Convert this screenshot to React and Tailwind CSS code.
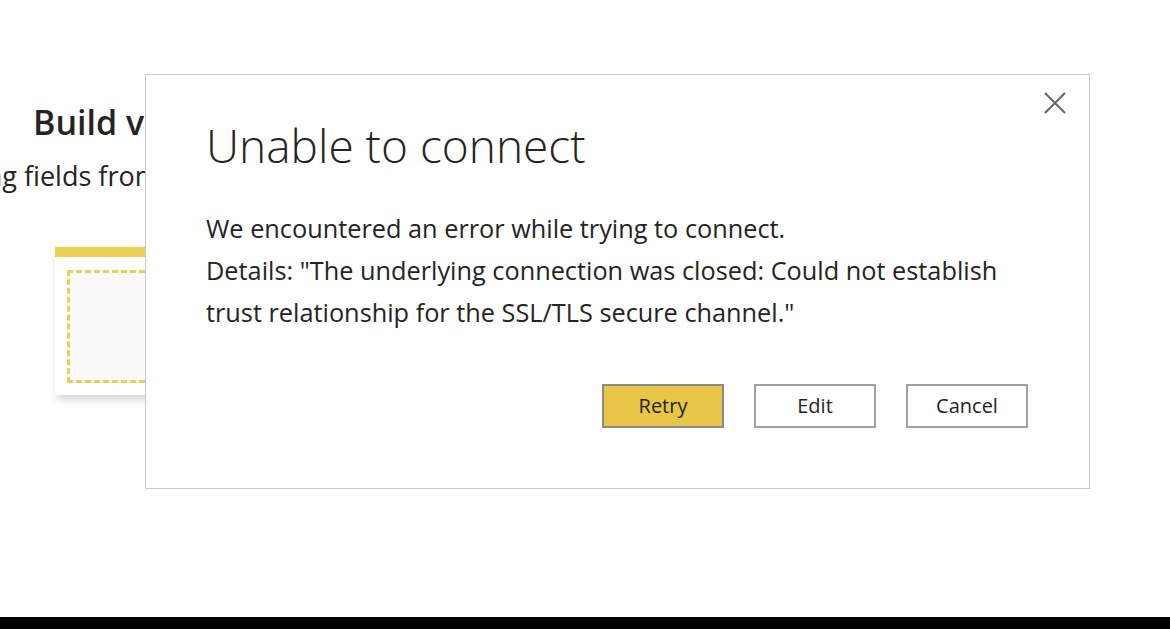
import React from 'react';

const font = { fontFamily: '"Open Sans", "Noto Sans", sans-serif' };

const Background = () => (
    <div className="flex flex-col">
        <h2 className="pl-[33px] pt-[100px] text-[34px] font-semibold text-[#252423] leading-[44px] whitespace-nowrap">
            Build visuals with your data
        </h2>
        <p className="ml-[-156px] mt-[14px] text-[27px] text-[#252423] leading-[36px] whitespace-nowrap">
            Select or drag fields from the Fields pane onto the report canvas.
        </p>
        <div className="ml-[55px] mt-[53px] w-[300px] h-[148px] bg-white border-t-[10px] border-[#eccf55] shadow-[2px_4px_8px_rgba(0,0,0,0.18)] p-[12px] pt-[13px]">
            <div className="w-full h-full border-[3px] border-dashed border-[#eccf55] bg-[#fafafa]" />
        </div>
    </div>
);

const Dialog = () => (
    <div className="absolute left-[145px] top-[74px] w-[945px] h-[415px] bg-white border border-[#c8c8c8] flex flex-col">
        <button className="absolute right-[22px] top-[16px] w-[24px] h-[24px] flex items-center justify-center text-[#666]">
            <svg width="22" height="22" viewBox="0 0 22 22" fill="none" stroke="currentColor" strokeWidth="2">
                <path d="M1 1L21 21M21 1L1 21" />
            </svg>
        </button>
        <div className="pl-[60px] pt-[40px] pr-[40px]">
            <h1 className="text-[46px] font-light text-[#252423] leading-[60px] whitespace-nowrap">Unable to connect</h1>
            <div className="mt-[32px] text-[25.3px] text-[#252423] leading-[42px] whitespace-nowrap">
                <p>We encountered an error while trying to connect.</p>
                <p>
                    Details: "The underlying connection was closed: Could not establish
                    <br />
                    trust relationship for the SSL/TLS secure channel."
                </p>
            </div>
        </div>
        <div className="flex justify-end gap-[30px] pr-[61px] mt-[51px]">
            <button className="w-[122px] h-[44px] bg-[#e8c547] border-2 border-[#8a8a8a] text-[20px] text-[#252423]">Retry</button>
            <button className="w-[122px] h-[44px] bg-white border-2 border-[#a0a0a0] text-[20px] text-[#252423]">Edit</button>
            <button className="w-[122px] h-[44px] bg-white border-2 border-[#a0a0a0] text-[20px] text-[#252423]">Cancel</button>
        </div>
    </div>
);

const App = () => {
    return (
        <div className="w-[1170px] h-[629px] flex flex-col overflow-hidden" style={font}>
            <div className="relative h-[617px] bg-white overflow-hidden">
                <Background />
                <Dialog />
            </div>
            <div className="h-[12px] bg-black" />
        </div>
    );
};

export default App;
